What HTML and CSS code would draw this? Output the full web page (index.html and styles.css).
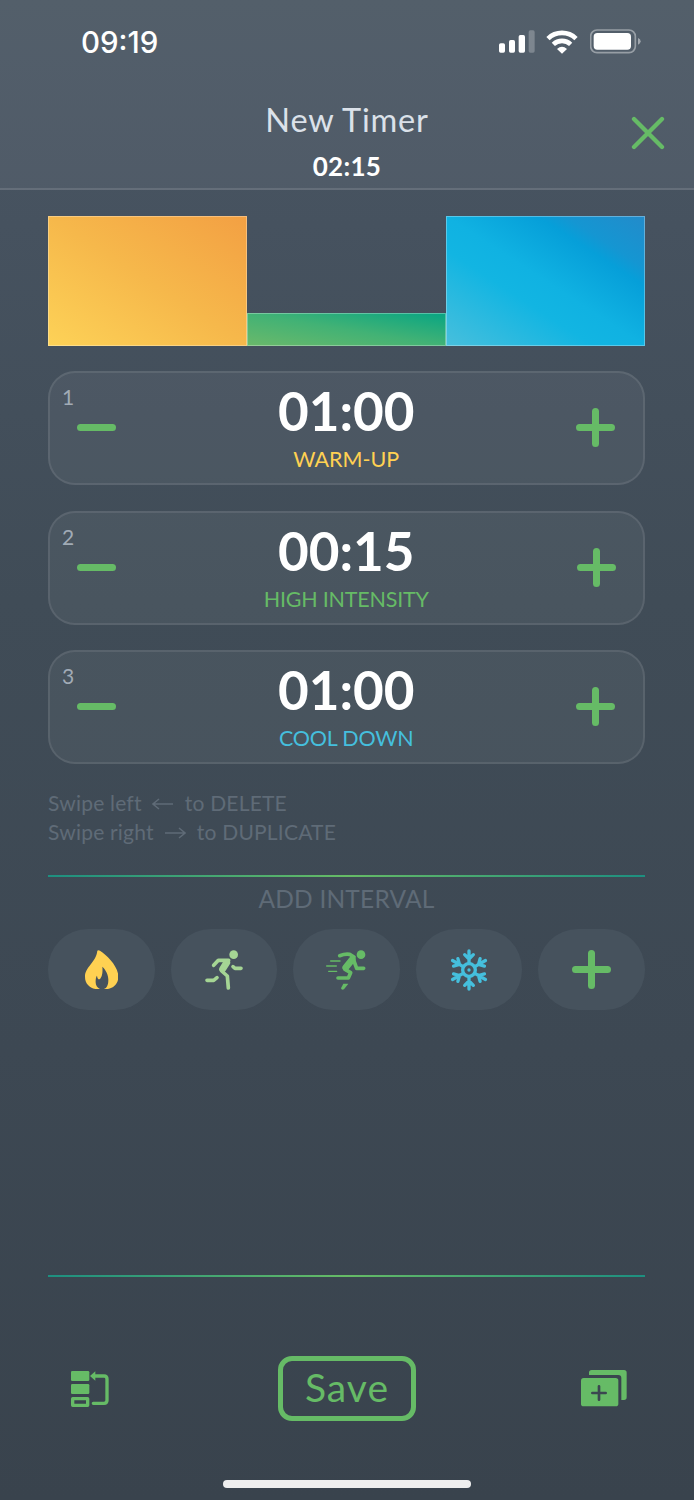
FILE: index.html
```html
<!DOCTYPE html>
<html lang="en">
<head>
    <meta charset="UTF-8">
    <meta name="viewport" content="width=device-width, initial-scale=1.0">
    <title>New Timer</title>

    <link rel="stylesheet" href="styles.css">
</head>

<body>

    <main class="screen">

        <header class="header">
            <div class="status-bar">
                <p class="clock">09:19</p>
                <div class="status-icons">
                    <svg width="36" height="23" viewBox="117 89 108 69" fill="#fff">
                        <rect x="117" y="129" width="18" height="28" rx="5"/>
                        <rect x="147" y="119" width="18" height="38" rx="5"/>
                        <rect x="176" y="104" width="19" height="53" rx="5"/>
                        <rect x="206" y="90" width="18" height="67" rx="5" opacity=".25"/>
                    </svg>
                    <svg class="wifi" width="32" height="24" viewBox="259 86 96 72" fill="none" stroke="#fff" stroke-width="14">
                        <path d="M265 112a60 60 0 0 1 84 0"/>
                        <path d="M281 129a38 38 0 0 1 52 0"/>
                        <path d="M307 157l-15-14q15-13 30 0z" fill="#fff" stroke="none"/>
                    </svg>
                    <svg class="battery" width="51" height="25" viewBox="390 86 153 75">
                        <rect x="392" y="89" width="134" height="68" rx="19" fill="none" stroke="#fff" stroke-opacity=".4" stroke-width="5"/>
                        <rect x="401" y="98" width="112" height="50" rx="11" fill="#fff"/>
                        <path d="M534 113q8 3 8 10t-8 10z" fill="#fff" opacity=".45"/>
                    </svg>
                </div>
            </div>
            <div class="title-bar">
                <h1 class="title">New Timer</h1>
                <p class="total">02:15</p>
                <svg class="close" width="34" height="34" viewBox="0 0 34 34">
                    <path d="M3 3L31 31M31 3L3 31"/>
                </svg>
            </div>
        </header>

        <section class="content">
            <div class="chart">
                <div class="bar warm"></div>
                <div class="bar high"></div>
                <div class="bar cool"></div>
            </div>

            <div class="intervals">
                <div class="interval">
                    <span class="number">1</span>
                    <svg class="step" viewBox="0 0 39 39"><path d="M3.500 19.500h32"/></svg>
                    <div class="interval-info">
                        <p class="time">01:00</p>
                        <p class="name yellow">WARM-UP</p>
                    </div>
                    <svg class="step" viewBox="0 0 39 39"><path d="M3.500 19.500h32M19.500 3.500v32"/></svg>
                </div>
                <div class="interval">
                    <span class="number">2</span>
                    <svg class="step" viewBox="0 0 39 39"><path d="M3.500 19.500h32"/></svg>
                    <div class="interval-info">
                        <p class="time">00:15</p>
                        <p class="name green">HIGH INTENSITY</p>
                    </div>
                    <svg class="step" viewBox="0 0 39 39"><path d="M3.500 19.500h32M19.500 3.500v32"/></svg>
                </div>
                <div class="interval">
                    <span class="number">3</span>
                    <svg class="step" viewBox="0 0 39 39"><path d="M3.500 19.500h32"/></svg>
                    <div class="interval-info">
                        <p class="time">01:00</p>
                        <p class="name blue">COOL DOWN</p>
                    </div>
                    <svg class="step" viewBox="0 0 39 39"><path d="M3.500 19.500h32M19.500 3.500v32"/></svg>
                </div>
            </div>

            <div class="hints">
                <p>Swipe left <svg class="arrow" viewBox="0 0 22 14"><path d="M21 7H1M7 2L1 7l6 5"/></svg> to DELETE</p>
                <p>Swipe right <svg class="arrow" viewBox="0 0 22 14"><path d="M1 7h20M15 2L21 7l-6 5"/></svg> to DUPLICATE</p>
            </div>

            <div class="divider"></div>

            <h2 class="add-title">ADD INTERVAL</h2>
            <div class="add-buttons">
                <button class="add">
                    <svg width="33.300" height="39.700" viewBox="0 0 100 119">
                        <path d="M37 2Q40-1 45 2C66 16 100 48 100 80C100 106 80 119 50 119C20 119 0 106 0 80C0 50 33 38 37 2z" fill="#ffd152"/>
                        <path d="M52 50C64 61 71 77 70 92C70 106 64 118 51 118C38 118 31 106 32 94C32 87 33 81 36 77C37 84 39 88 43 88C51 84 54 66 52 50z" fill="#46525d"/>
                    </svg>
                </button>
                <button class="add">
                    <svg width="38" height="40" viewBox="42 59 114 120" fill="none" stroke="#a5d594" stroke-width="11" stroke-linecap="round" stroke-linejoin="round">
                        <circle cx="128" cy="73" r="13" fill="#a5d594" stroke="none"/>
                        <path d="M68 105L82 90H113"/>
                        <path d="M107 97L95 116" stroke-width="21"/>
                        <path d="M92 122L109 137L112 173"/>
                        <path d="M126 109L132 114H150"/>
                        <path d="M48 150H68L78 142"/>
                    </svg>
                </button>
                <button class="add">
                    <svg width="40" height="40" viewBox="408 59 120 120" fill="none" stroke="#66bb66" stroke-width="11" stroke-linecap="round" stroke-linejoin="round">
                        <circle cx="513" cy="73" r="13" fill="#66bb66" stroke="none"/>
                        <path d="M449 76Q465 70 479 72L492 80"/>
                        <path d="M487 87L467 112" stroke-width="20"/>
                        <path d="M465 117L482 127L475 143H444"/>
                        <path d="M492 92L500 114H521"/>
                        <path d="M453 174L460 160H475L462 177Q455 181 453 174z" fill="#66bb66" stroke="none"/>
                        <path d="M422 92h28M410 107h29M416 123h24" stroke-width="4"/>
                    </svg>
                </button>
                <button class="add">
                    <svg width="38" height="42" viewBox="-57 -63 114 126" fill="none" stroke="#45bfdd" stroke-width="10" stroke-linecap="round">
                        <defs>
                            <path id="arm" d="M0-20V-57M0-33L-13-46M0-33L13-46"/>
                        </defs>
                        <circle r="19"/>
                        <circle r="5" fill="#45bfdd" stroke="none"/>
                        <use href="#arm"/>
                        <use href="#arm" transform="rotate(60)"/>
                        <use href="#arm" transform="rotate(120)"/>
                        <use href="#arm" transform="rotate(180)"/>
                        <use href="#arm" transform="rotate(240)"/>
                        <use href="#arm" transform="rotate(300)"/>
                    </svg>
                </button>
                <button class="add">
                    <svg class="step" viewBox="0 0 39 39"><path d="M3.500 19.500h32M19.500 3.500v32"/></svg>
                </button>
            </div>
        </section>

        <footer class="footer">
            <div class="divider"></div>
            <div class="actions">
                <svg class="order" width="38" height="36" viewBox="92 90 114 108" fill="#66bb66">
                    <rect x="92" y="90" width="55" height="30" rx="4"/>
                    <rect x="92" y="129" width="55" height="30" rx="4"/>
                    <rect x="97" y="173" width="45" height="20" fill="none" stroke="#66bb66" stroke-width="10" stroke-linejoin="round"/>
                    <path d="M149 105L165 91V119z"/>
                    <path d="M159 187H191Q200 187 200 178V114Q200 105 191 105H163" fill="none" stroke="#66bb66" stroke-width="10" stroke-linecap="round"/>
                </svg>
                <button class="save">Save</button>
                <svg class="copy" width="46" height="37" viewBox="63 89 138 111" fill="#66bb66">
                    <path d="M87 104V97Q87 89 95 89H192Q200 89 200 97V171Q200 179 192 179H184V113Q184 104 175 104z"/>
                    <rect x="63" y="113" width="112" height="85" rx="8"/>
                    <path d="M97 158H137M117 138V178" stroke="#3b4650" stroke-width="8" stroke-linecap="round"/>
                </svg>
            </div>
            <div class="home-indicator"></div>
        </footer>

    </main>

</body>
</html>
```
FILE: styles.css
```css
*{
    padding: 0;
    margin: 0;
    box-sizing: border-box;
    font-family: Lato, "Liberation Sans", sans-serif;
}
svg{
    display: block;
    flex-shrink: 0;
}
button{
    border: none;
    background: transparent;
}

.screen{
    width: 694px;
    height: 1500px;
    display: flex;
    flex-direction: column;
    background: linear-gradient(to bottom, #4a5763, #46525f 15%, #404c57 40%, #3d4853 70%, #39434d);
}

.header{
    height: 190px;
    background-color: rgba(255, 255, 255, 0.05);
    border-bottom: 2px solid rgba(255, 255, 255, 0.12);
}
.status-bar{
    display: flex;
    justify-content: space-between;
    height: 83px;
    padding: 0 53px 0 81px;
    align-items: center;
}
.clock{
    color: white;
    font-family: Inter, sans-serif;
    font-size: 29.500px;
    font-weight: 500;
}
.status-icons{
    display: flex;
    align-items: center;
}
.wifi{
    margin-left: 11px;
}
.battery{
    margin-left: 12px;
}

.title-bar{
    position: relative;
    text-align: center;
    padding-top: 17px;
}
.title{
    color: #dbe1e9;
    font-size: 32.500px;
    font-weight: 400;
    line-height: 40px;
    letter-spacing: 0.800px;
}
.total{
    color: white;
    font-size: 26px;
    font-weight: 700;
    line-height: 32px;
    margin-top: 10px;
    letter-spacing: 0.300px;
}
.close{
    position: absolute;
    top: 33px;
    right: 29px;
    stroke: #66bb66;
    stroke-width: 4.300;
    stroke-linecap: round;
}

.content{
    padding: 25.500px 49px 0 48px;
}
.chart{
    display: flex;
    align-items: flex-end;
    height: 130px;
}
.bar{
    flex: 1;
    height: 100%;
    border: 1.500px solid rgba(255, 255, 255, 0.3);
    background-origin: border-box;
}
.warm{
    background-image: linear-gradient(to top right, #fdd257, #f6b84b 50%, #f3a043);
}
.high{
    height: 33px;
    background-image: linear-gradient(to top right, #6bb96a, #42b275 50%, #07a583);
}
.cool{
    background-image: linear-gradient(to top right, #48bfdc, #12b5e2 37%, #10b2e2 50%, #069fd9 73%, #1596d2 80%, #238bca);
}

.intervals{
    display: flex;
    flex-direction: column;
    gap: 25.500px;
    margin-top: 25.500px;
}
.interval{
    position: relative;
    display: flex;
    justify-content: space-between;
    align-items: center;
    height: 114px;
    padding: 0 27.500px 0 27px;
    border: 2px solid rgba(255, 255, 255, 0.09);
    border-radius: 27px;
    background-color: rgba(255, 255, 255, 0.05);
}
.number{
    position: absolute;
    top: 12px;
    left: 12px;
    color: #a1abb6;
    font-size: 21px;
    line-height: 24px;
}
.step{
    width: 39px;
    height: 39px;
    margin-top: -1px;
    fill: none;
    stroke: #66bb66;
    stroke-width: 7;
    stroke-linecap: round;
}
.interval-info{
    text-align: center;
    margin-top: -2px;
}
.time{
    color: white;
    font-size: 53px;
    font-weight: 700;
    line-height: 60px;
}
.name{
    font-size: 21.500px;
    line-height: 28px;
    margin-top: 4px;
}
.yellow{
    color: #ffd152;
}
.green{
    color: #66bb66;
    letter-spacing: -0.200px;
}
.blue{
    color: #45bfdd;
    letter-spacing: -0.200px;
}

.hints{
    margin-top: 25px;
    color: #5f6b77;
    font-size: 21px;
    line-height: 28.500px;
    letter-spacing: 0.200px;
}
.arrow{
    display: inline-block;
    width: 22px;
    height: 14px;
    margin: 0 5px;
    fill: none;
    stroke: #5f6b77;
    stroke-width: 1.500;
}

.divider{
    height: 2px;
    background: linear-gradient(to right, #1d8f80, #66bb66 50%, #1d8f80);
}
.hints + .divider{
    margin-top: 29px;
}

.add-title{
    color: #5f6b77;
    font-size: 24.500px;
    font-weight: 400;
    line-height: 30px;
    letter-spacing: 0.200px;
    text-align: center;
    margin-top: 7px;
}
.add-buttons{
    display: grid;
    grid-template-columns: repeat(5, 1fr);
    gap: 16px;
    margin-top: 15px;
}
.add{
    height: 81px;
    border-radius: 40px;
    background-color: #46525d;
    display: flex;
    align-items: center;
    justify-content: center;
}
.add .step{
    margin-top: 0;
}

.footer{
    margin-top: auto;
    height: 225px;
    padding: 0 49px 0 48px;
}
.actions{
    display: flex;
    align-items: center;
    justify-content: space-between;
    margin-top: 79px;
    padding: 0 18px 0 23px;
}
.save{
    width: 138px;
    height: 65px;
    margin-left: 4px;
    padding-bottom: 3px;
    border: 5px solid #66bb66;
    border-radius: 14px;
    color: #66bb66;
    font-size: 39px;
    letter-spacing: 1px;
}
.home-indicator{
    width: 248px;
    height: 8px;
    margin: 59px auto 0;
    border-radius: 4px;
    background-color: #eeeeee;
}
```
